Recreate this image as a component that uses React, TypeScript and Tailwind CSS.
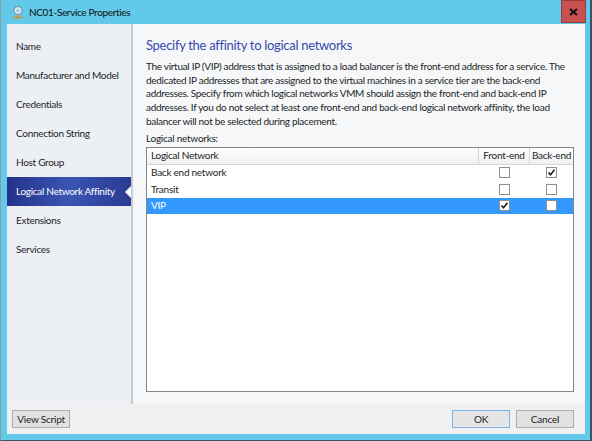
import { useState } from 'react';

const navItems = [
  'Name',
  'Manufacturer and Model',
  'Credentials',
  'Connection String',
  'Host Group',
  'Logical Network Affinity',
  'Extensions',
  'Services',
];

const networks = [
  { name: 'Back end network', front: false, back: true },
  { name: 'Transit', front: false, back: false },
  { name: 'VIP', front: true, back: false },
];

const intro = [
  'The virtual IP (VIP) address that is assigned to a load balancer is the front-end address for a service. The',
  'dedicated IP addresses that are assigned to the virtual machines in a service tier are the back-end',
  'addresses. Specify from which logical networks VMM should assign the front-end and back-end IP',
  'addresses. If you do not select at least one front-end and back-end logical network affinity, the load',
  'balancer will not be selected during placement.',
];

function CheckBox({ checked }: { checked: boolean }) {
  return (
    <div className="w-[11px] h-[11px] border border-[#8f8f8f] bg-white flex items-center justify-center">
      {checked && (
        <svg width="9" height="9" viewBox="0 0 9 9">
          <path d="M1.5 4.5 L3.5 6.8 L7.5 1.8" fill="none" stroke="#1a1a1a" strokeWidth="1.6" />
        </svg>
      )}
    </div>
  );
}

function App() {
  const [selected, setSelected] = useState(5);
  const [row, setRow] = useState(2);

  return (
    <div
      className="w-[592px] h-[441px] bg-[#62c9ea] flex flex-col border-l border-l-[#8d9aa3] border-r-2 border-r-[#37556a] border-b border-b-[#37556a] text-[#1e1e1e]"
      style={{ fontFamily: 'Lato, "Liberation Sans", sans-serif' }}
    >
      {/* Title bar */}
      <div className="h-[24px] flex items-center shrink-0">
        <svg width="14" height="14" viewBox="0 0 14 14" className="ml-[10px] mr-[4px]">
          <circle cx="7" cy="5.5" r="4" fill="#e8f4fb" stroke="#6c8795" strokeWidth="1" />
          <circle cx="7" cy="5.5" r="2" fill="#9fd0ea" />
          <path d="M7 9.5 V11.5 M2 12.5 H12" stroke="#e08a1e" strokeWidth="1.6" />
        </svg>
        <span className="text-[10px] tracking-[-0.35px] text-[#111]">NC01-Service Properties</span>
        <div className="flex-1" />
        <div className="w-[25px] h-[23px] bg-[#c75050] border border-[#9b3b3b] flex items-center justify-center mr-[4px] self-start">
          <svg width="9" height="8" viewBox="0 0 9 8">
            <path d="M1 1 L8 7 M8 1 L1 7" stroke="#111" strokeWidth="2" />
          </svg>
        </div>
      </div>

      {/* Client area */}
      <div className="flex-1 flex flex-col ml-[6px] mr-[5px] mb-[6px] bg-[#f0f0f0]">
        <div className="flex-1 flex min-h-0">
          {/* Navigation */}
          <div className="w-[124px] shrink-0 bg-[#eceff3] pt-[8px] flex flex-col">
            {navItems.map((item, i) => (
              <div
                key={item}
                onClick={() => setSelected(i)}
                className={`relative h-[29px] flex items-center pl-[9px] text-[10px] tracking-[-0.3px] whitespace-nowrap ${
                  i === selected ? 'bg-gradient-to-r from-[#25338a] via-[#3a55b4] to-[#2a3b91] text-white' : 'text-[#1e1e1e]'
                }`}
              >
                {item}
                {i === selected && (
                  <div className="absolute right-0 top-[9px] w-0 h-0 border-y-[6px] border-y-transparent border-r-[6px] border-r-white" />
                )}
              </div>
            ))}
          </div>
          <div className="w-[2px] shrink-0 bg-[#c6cacf]" />

          {/* Main panel */}
          <div className="flex-1 min-w-0 overflow-hidden bg-[#f5f7f9] pl-[13px] pr-[11px] pt-[12px] flex flex-col">
            <h1 className="text-[13px] tracking-[-0.3px] text-[#3548b0] leading-[18px]">
              Specify the affinity to logical networks
            </h1>
            <div className="mt-[6px] text-[10px] tracking-[-0.3px] leading-[13.7px] text-[#1e1e1e]">
              {intro.map((line) => (
                <div key={line} className="whitespace-nowrap">
                  {line}
                </div>
              ))}
            </div>
            <div className="mt-[3px] text-[10px] tracking-[-0.25px] leading-[13px]">Logical networks:</div>
            <div className="mt-[2px] h-[245px] border border-[#828790] bg-white flex flex-col text-[10px] tracking-[-0.25px] whitespace-nowrap">
              <div className="h-[17px] flex border-b border-[#d5d5d5] bg-gradient-to-b from-white to-[#eef0f2]">
                <div className="flex-1 pl-[4px] flex items-center border-r border-[#d5d5d5]">Logical Network</div>
                <div className="w-[51px] flex items-center justify-center border-r border-[#d5d5d5]">Front-end</div>
                <div className="w-[43px] flex items-center justify-center">Back-end</div>
              </div>
              {networks.map((n, i) => (
                <div
                  key={n.name}
                  onClick={() => setRow(i)}
                  className={`h-[16.5px] flex items-center ${i === row ? 'bg-[#3399ff] text-white' : ''}`}
                >
                  <div className="flex-1 pl-[4px]">{n.name}</div>
                  <div className="w-[51px] flex justify-center">
                    <CheckBox checked={n.front} />
                  </div>
                  <div className="w-[43px] flex justify-center">
                    <CheckBox checked={n.back} />
                  </div>
                </div>
              ))}
            </div>
          </div>
        </div>

        {/* Bottom buttons */}
        <div className="h-[30px] shrink-0 flex items-center px-[5px] bg-[#f0f0f0] text-[10px] tracking-[-0.2px]">
          <button className="w-[58px] h-[18px] border border-[#adadad] bg-[#e1e1e1] flex items-center justify-center">
            View Script
          </button>
          <div className="flex-1" />
          <button className="w-[58px] h-[18px] border border-[#7eb4ea] bg-[#e5e5e5] flex items-center justify-center mr-[6px]">
            OK
          </button>
          <button className="w-[58px] h-[18px] border border-[#adadad] bg-[#e1e1e1] flex items-center justify-center mr-[6px]">
            Cancel
          </button>
        </div>
      </div>
    </div>
  );
}

export default App;
